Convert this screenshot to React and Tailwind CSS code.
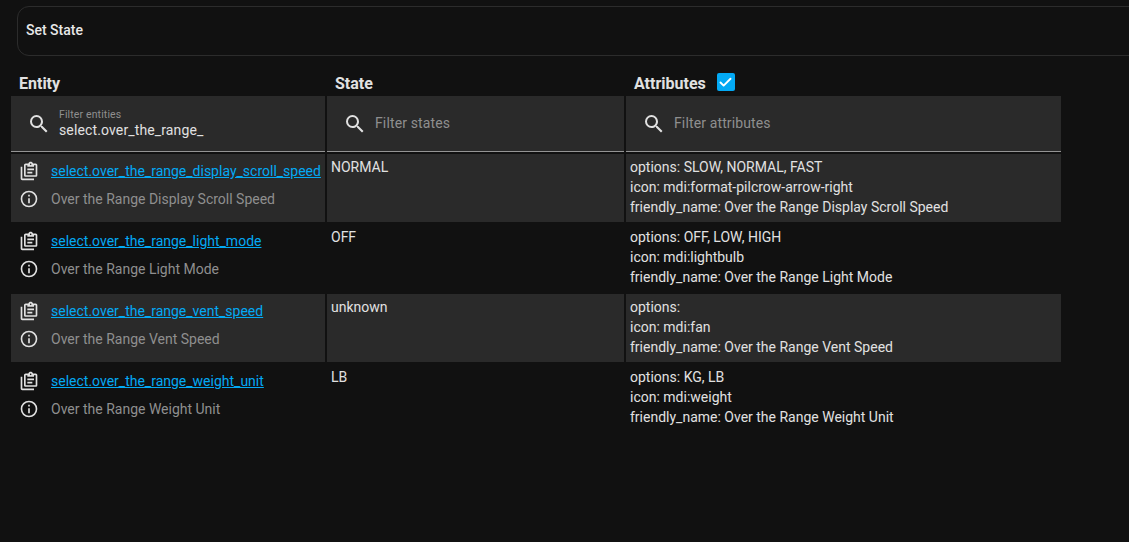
import { Check } from "lucide-react";

const rows = [
  {
    entity: "select.over_the_range_display_scroll_speed",
    name: "Over the Range Display Scroll Speed",
    state: "NORMAL",
    attrs: ["options: SLOW, NORMAL, FAST", "icon: mdi:format-pilcrow-arrow-right", "friendly_name: Over the Range Display Scroll Speed"],
  },
  {
    entity: "select.over_the_range_light_mode",
    name: "Over the Range Light Mode",
    state: "OFF",
    attrs: ["options: OFF, LOW, HIGH", "icon: mdi:lightbulb", "friendly_name: Over the Range Light Mode"],
  },
  {
    entity: "select.over_the_range_vent_speed",
    name: "Over the Range Vent Speed",
    state: "unknown",
    attrs: ["options:", "icon: mdi:fan", "friendly_name: Over the Range Vent Speed"],
  },
  {
    entity: "select.over_the_range_weight_unit",
    name: "Over the Range Weight Unit",
    state: "LB",
    attrs: ["options: KG, LB", "icon: mdi:weight", "friendly_name: Over the Range Weight Unit"],
  },
];

const Mdi = ({ d, className }) => (
  <svg viewBox="0 0 24 24" fill="currentColor" className={className}>
    <path d={d} />
  </svg>
);

const magnify =
  "M9.5,3A6.5,6.5 0 0,1 16,9.5C16,11.11 15.41,12.59 14.44,13.73L14.71,14H15.5L20.5,19L19,20.5L14,15.5V14.71L13.73,14.44C12.59,15.41 11.11,16 9.5,16A6.5,6.5 0 0,1 3,9.5A6.5,6.5 0 0,1 9.5,3M9.5,5C7,5 5,7 5,9.5C5,12 7,14 9.5,14C12,14 14,12 14,9.5C14,7 12,5 9.5,5Z";
const info =
  "M11,9H13V7H11M12,20C7.59,20 4,16.41 4,12C4,7.59 7.59,4 12,4C16.41,4 20,7.59 20,12C20,16.41 16.41,20 12,20M12,2A10,10 0 0,0 2,12A10,10 0 0,0 12,22A10,10 0 0,0 22,12A10,10 0 0,0 12,2M11,17H13V11H11V17Z";
const clipboard =
  "M4 7V21H18V23H4C2.9 23 2 22.1 2 21V7H4M20 3C21.1 3 22 3.9 22 5V17C22 18.1 21.1 19 20 19H8C6.9 19 6 18.1 6 17V5C6 3.9 6.9 3 8 3H11.18C11.6 1.84 12.7 1 14 1C15.3 1 16.4 1.84 16.82 3H20M14 3C13.45 3 13 3.45 13 4C13 4.55 13.45 5 14 5C14.55 5 15 4.55 15 4C15 3.45 14.55 3 14 3M10 7V5H8V17H20V5H18V7H10M18 11H10V9H18V11M16 15H10V13H16V15Z";

function FilterCell({ label, value }) {
  return (
    <div className="h-[56px] bg-[#2a2a2a] border-b border-[#949494] flex items-center">
      <Mdi d={magnify} className="w-6 h-6 ml-4 text-[#e1e1e1] shrink-0" />
      {value ? (
        <div className="ml-2 flex flex-col">
          <span className="text-[10.5px] leading-[12px] tracking-[0.13px] text-[#8f8f8f]">{label}</span>
          <span className="text-sm leading-[18px] tracking-[0.13px] text-[#e1e1e1]">{value}</span>
        </div>
      ) : (
        <span className="ml-2 text-sm tracking-[0.13px] text-[#8f8f8f] -mt-[2px]">{label}</span>
      )}
    </div>
  );
}

export default function App() {
  return (
    <div className="h-[542px] w-[1129px] overflow-hidden bg-[#111111] font-['Roboto',sans-serif] text-[#e1e1e1]">
      <div className="pt-[6px] pl-[17px]">
        <div className="w-[1130px] h-[50px] border border-[#2c2c2c] rounded-l-xl flex items-center pl-2 pb-[2px]">
          <span className="text-sm font-medium text-[#e8e8e8]">Set State</span>
        </div>
      </div>

      <div className="mt-[13px] ml-[11px] grid grid-cols-[314px_297px_435px] gap-[2px] w-[1050px]">
        <div className="h-[27px] pl-2 pt-[3px] flex items-center text-base font-bold">Entity</div>
        <div className="h-[27px] pl-2 pt-[3px] flex items-center text-base font-bold">State</div>
        <div className="h-[27px] pl-2 flex items-center text-base font-bold">
          <span className="pt-[3px]">Attributes</span>
          <span className="ml-[11px] -mt-[1px] w-[18px] h-[18px] rounded-[2px] bg-[#03a9f4] flex items-center justify-center">
            <Check size={15} strokeWidth={3} className="text-white" />
          </span>
        </div>

        <div className="-mt-[2px]"><FilterCell label="Filter entities" value="select.over_the_range_" /></div>
        <div className="-mt-[2px]"><FilterCell label="Filter states" /></div>
        <div className="-mt-[2px]"><FilterCell label="Filter attributes" /></div>

        {rows.map((row, i) => {
          const bg = i % 2 === 0 ? "bg-[#2a2a2a]" : "";
          return [
            <div key={row.entity} className={`h-[68px] pt-[7px] pl-[6px] ${bg}`}>
              <div className="flex items-center h-5">
                <Mdi d={clipboard} className="w-5 h-5 text-[#e1e1e1] shrink-0 ml-[2px]" />
                <a href="#" className="ml-3 text-sm underline text-[#03a9f4] whitespace-nowrap">{row.entity}</a>
              </div>
              <div className="flex items-center h-5 mt-2">
                <Mdi d={info} className="w-5 h-5 text-[#e1e1e1] shrink-0 ml-[2px]" />
                <span className="ml-3 text-sm text-[#8f8f8f] whitespace-nowrap">{row.name}</span>
              </div>
            </div>,
            <div key={row.entity + "-state"} className={`h-[68px] pl-1 pt-[3px] text-sm leading-5 ${bg}`}>{row.state}</div>,
            <div key={row.entity + "-attrs"} className={`h-[68px] pl-1 pt-[3px] text-sm leading-5 ${bg}`}>
              {row.attrs.map((a) => <div key={a}>{a}</div>)}
            </div>,
          ];
        })}
      </div>
    </div>
  );
}
